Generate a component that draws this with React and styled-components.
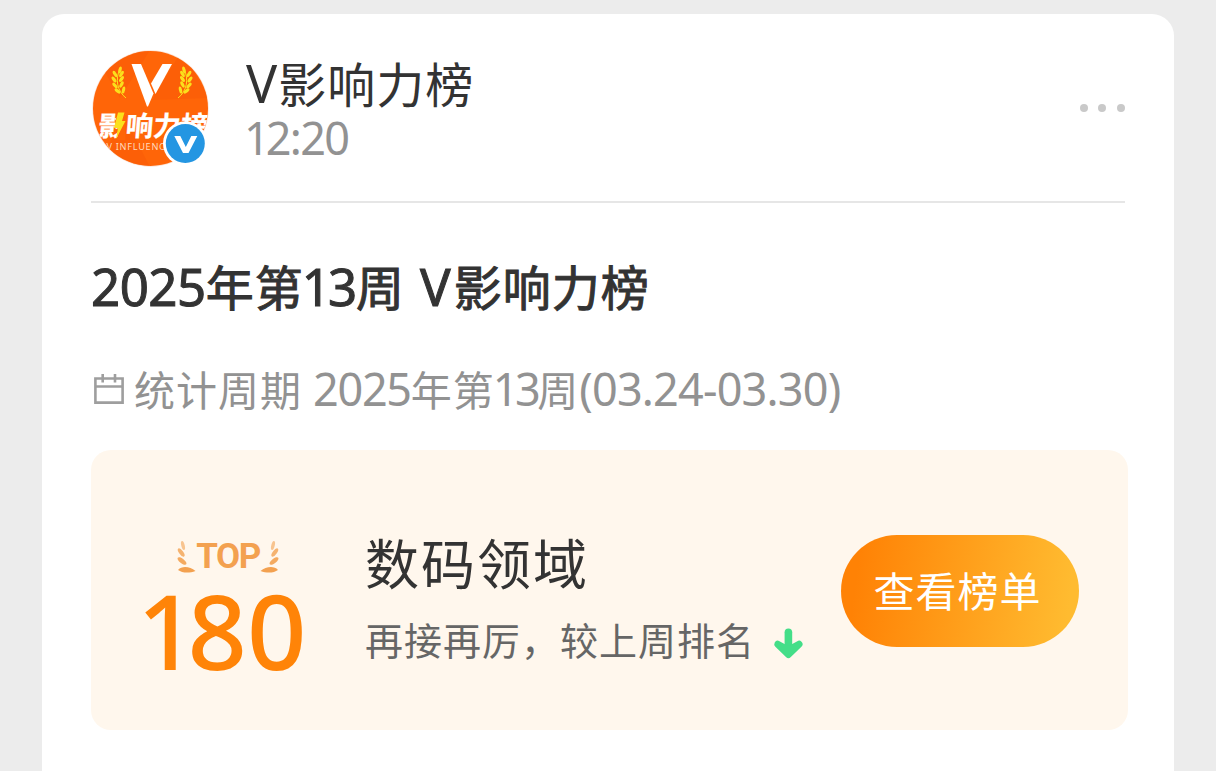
import styled, { createGlobalStyle } from "styled-components"

const GlobalStyle = createGlobalStyle`
* {
    box-sizing: border-box;
}
body {
    margin: 0;
    background: #ececec;
    font-family: "Noto Sans", "Noto Sans CJK SC", sans-serif;
    overflow: hidden;
}
`
const Page = styled.div`
height: 771px;
padding: 14px 42px 0;
overflow: hidden;
`
const Card = styled.div`
background: #fff;
border-radius: 22px 22px 0 0;
height: 780px;
padding: 0 46px 0 49px;
`
const Header = styled.div`
display: flex;
align-items: flex-start;
height: 189px;
margin-right: 3px;
padding: 36px 0 0 1px;
border-bottom: 2px solid #e6e6e6;
`
const Info = styled.div`
flex: 1;
margin-left: 37px;
`
const Line = styled.div`
display: flex;
align-items: baseline;
white-space: pre;
font-family: "Noto Sans CJK SC", sans-serif;
font-size: ${p => p.$size}px;
line-height: ${p => p.$height}px;
letter-spacing: ${p => p.$gap || 0}px;
color: ${p => p.$color};
-webkit-text-stroke: ${p => p.$stroke || 0}px ${p => p.$color};
`
const Latin = styled.span`
font-family: "Noto Sans", sans-serif;
font-size: ${p => p.$size}px;
letter-spacing: ${p => p.$gap || 0}px;
margin-left: ${p => p.$left || 0}px;
margin-right: ${p => p.$right || 0}px;
line-height: 1;
`
const More = styled.div`
display: flex;
gap: 10.6px;
margin-top: 54px;
span {
    width: 8px;
    height: 8px;
    border-radius: 50%;
    background: #c9c9c9;
}
`
const Title = styled.div`
height: 60px;
margin-top: 52px;
`
const Period = styled.div`
display: flex;
align-items: flex-start;
margin-top: 43px;
height: 63px;
svg {
    margin: 15px 9px 0 2px;
}
`
const Panel = styled.div`
display: flex;
align-items: flex-start;
height: 280px;
margin-top: 29px;
border-radius: 20px;
background: #fff7ed;
`
const Rank = styled.div`
width: 274px;
padding-top: 87px;
`
const Top = styled.div`
display: flex;
align-items: center;
height: 40px;
padding-left: 85px;
color: #f3a150;
`
const TopText = styled.span`
font-family: Roboto, sans-serif;
font-size: 35px;
font-weight: 700;
line-height: 40px;
width: 64px;
letter-spacing: -1.5px;
text-align: center;
white-space: nowrap;
`
const Number = styled.div`
font-family: "Noto Sans", sans-serif;
font-size: 104px;
font-weight: 500;
line-height: 106px;
color: #ff8408;
padding-left: 46px;
&::first-letter {
    letter-spacing: -9px;
}
`
const Detail = styled.div`
flex: 1;
padding-top: 76px;
`
const Compare = styled.div`
display: flex;
align-items: center;
margin-top: 6px;
svg {
    margin: 9px 0 0 18px;
}
`
const Button = styled.button`
width: 238px;
height: 112px;
margin: 85px 49px 0 0;
border: none;
border-radius: 56px;
background: linear-gradient(97deg, #ff8205 8%, #ffbb30 94%);
color: #fff;
font-family: "Noto Sans CJK SC", sans-serif;
font-size: 41px;
letter-spacing: 1px;
padding: 0 5px 5px 0;
cursor: pointer;
`

const leaves = [
    [28, 20, 15], [23, 24, -32], [29.5, 24, 32], [22, 29.5, -35], [29.5, 29, 35],
    [23, 35.5, -42], [29.5, 34.5, 28], [25.5, 41, -50], [31.5, 40, 12]
]

function Wreath() {
    return (
        <g fill="#fbe01c">
            <path d="M28 19C23 29 25 41 34 48" fill="none" stroke="#fbe01c" strokeWidth="1" />
            {leaves.map(([x, y, r]) => (
                <ellipse key={x + "-" + y} cx={x} cy={y} rx="1.6" ry="3.5" transform={`rotate(${r} ${x} ${y})`} />
            ))}
        </g>
    )
}

function Avatar() {
    return (
        <svg width="117" height="118" viewBox="0 0 117 118">
            <defs>
                <clipPath id="face"><circle cx="58.5" cy="58.5" r="57.5" /></clipPath>
            </defs>
            <circle cx="58.5" cy="58.5" r="58.2" fill="#fbe3d6" />
            <g clipPath="url(#face)">
                <rect width="118" height="118" fill="#ff6508" />
                <path d="M0 0H58L28 48ZM60 50L90 0L117 48ZM0 117L34 70L58 117Z" fill="#fa5c06" opacity=".6" />
                <path d="M39.5 14H49L61.5 43.5L56 56.5H55Z" fill="#fff" />
                <path d="M70.5 14H80L63.5 44L59 33.5Z" fill="#fff" />
                <Wreath />
                <g transform="translate(120 0) scale(-1 1)"><Wreath /></g>
                <text x="6" y="86" fontFamily="Noto Sans CJK SC" fontSize="27.5" fontWeight="700" fill="#fff" stroke="#fff" strokeWidth=".3" transform="translate(7 0) skewX(-5)">影响力榜</text>
                <path d="M25 60H33.500V90H25L27 74L23.500 73Z" fill="#ff6508" />
                <path d="M26 62.5H32.5L30 71H33.5L24 89L26 78H22Z" fill="#fbe01c" />
                <text x="14.5" y="99.8" fontFamily="Noto Sans" fontSize="9.2" letterSpacing=".7" fill="#ffd9bd">V INFLUENCE</text>
            </g>
            <circle cx="93.3" cy="93.5" r="22.3" fill="#fff" />
            <circle cx="93.3" cy="93.5" r="19.5" fill="#2496e2" />
            <path d="M82.300 86H88.300L93.800 97L99.300 86H105.300L96.500 103H91Z" fill="#fff" />
        </svg>
    )
}

function CalendarIcon() {
    return (
        <svg width="32" height="32" viewBox="0 0 32 32" fill="none" stroke="#9e9e9e" strokeWidth="2.6">
            <path d="M2.400 5.500H29.600V29.600H2.400ZM2.400 13.500H29.600M9.700 1V9.500M22 1V9.500" />
        </svg>
    )
}

function Laurel({ flip }) {
    return (
        <svg width="20" height="34" viewBox="0 0 20 34">
            <g fill="currentColor" transform={flip ? "translate(20 0) scale(-1 1)" : undefined}>
                <ellipse cx="7" cy="5.500" rx="1.700" ry="4.600" transform="rotate(-14 7 5.500)" opacity=".6" />
                <ellipse cx="5.200" cy="12.500" rx="2" ry="5" transform="rotate(-36 5.200 12.500)" opacity=".8" />
                <ellipse cx="6" cy="21" rx="2.300" ry="5.400" transform="rotate(-52 6 21)" opacity=".9" />
                <path d="M2 30C6 25.500 14 26.500 19.500 31C13 33.500 6 33 2 30Z" />
            </g>
        </svg>
    )
}

function DownArrow() {
    return (
        <svg width="32" height="32" viewBox="0 0 32 32" fill="#44de88" stroke="#44de88" strokeLinecap="round" strokeLinejoin="round">
            <path d="M15.400 4.200V22" strokeWidth="7.600" />
            <path d="M4.800 16.200L15.400 26.500L26 16.200L15.400 22Z" strokeWidth="7" />
        </svg>
    )
}

function App() {
    return (
        <>
        <GlobalStyle />
        <Page>
            <Card>
                <Header>
                    <Avatar />
                    <Info>
                        <Line $size={48} $height={65} $gap={1} $color="#333">
                            <Latin $size={52} $right={1}>V</Latin>影响力榜
                        </Line>
                        <Line $size={44} $height={54} $color="#929292">
                            <Latin $size={45} $gap={-4} $left={-2}>1</Latin>
                            <Latin $size={45} $gap={-1.7}>2:20</Latin>
                        </Line>
                    </Info>
                    <More><span /><span /><span /></More>
                </Header>
                <Title>
                    <Line $size={48} $height={60} $gap={1} $color="#333" $stroke={1}>
                        <Latin $size={51} $gap={-0.5}>2025</Latin>年第
                        <Latin $size={51} $gap={-3} $left={-2} $right={2}>13</Latin>周
                        <Latin $size={51} $left={15} $right={3}>V</Latin>影响力榜
                    </Line>
                </Title>
                <Period>
                    <CalendarIcon />
                    <Line $size={41} $height={60} $gap={1} $color="#929292">
                        统计周期
                        <Latin $size={45} $gap={-1.3} $left={11}>2025</Latin>年第
                        <Latin $size={45} $gap={-3.5} $left={-2}>13</Latin>周
                        <Latin $size={45} $gap={-0.8}>(03.24-03.30)</Latin>
                    </Line>
                </Period>
                <Panel>
                    <Rank>
                        <Top>
                            <Laurel />
                            <TopText>TOP</TopText>
                            <Laurel flip />
                        </Top>
                        <Number>180</Number>
                    </Rank>
                    <Detail>
                        <Line $size={54} $height={72} $gap={2} $color="#333">数码领域</Line>
                        <Compare>
                            <Line $size={38} $height={70} $gap={1} $color="#666">再接再厉，较上周排名</Line>
                            <DownArrow />
                        </Compare>
                    </Detail>
                    <Button>查看榜单</Button>
                </Panel>
            </Card>
        </Page>
        </>
    )
}

export default App
